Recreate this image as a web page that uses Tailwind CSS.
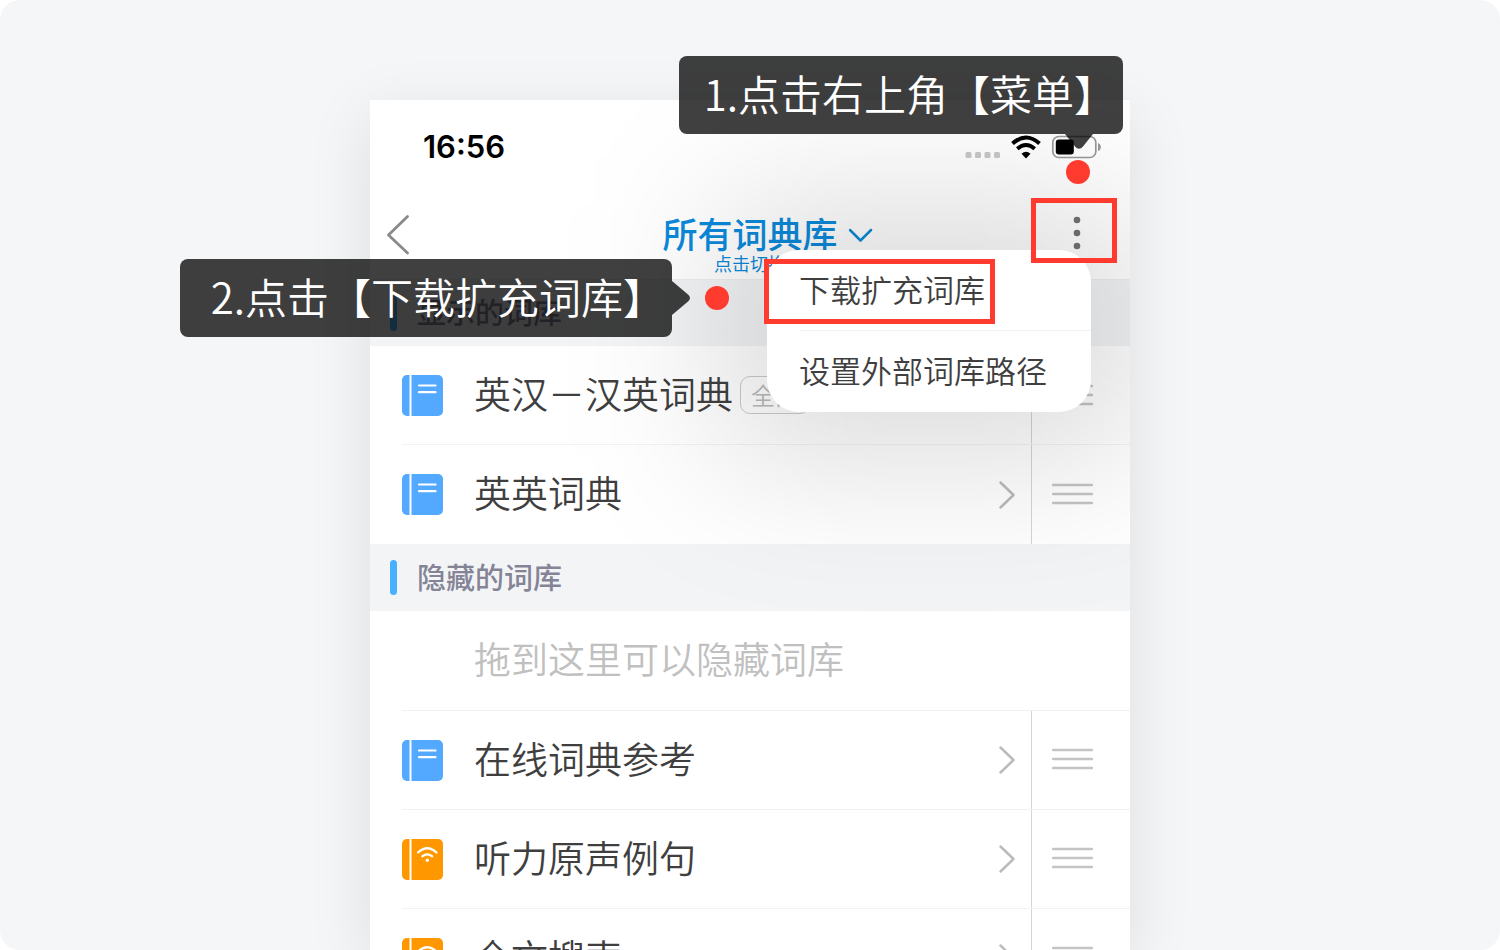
<!DOCTYPE html>
<html lang="zh-CN">
<head>
    <meta charset="UTF-8">
    <meta name="viewport" content="width=device-width, initial-scale=1.0">
    <title>下载扩充词库</title>
    <script src="https://cdn.jsdelivr.net/npm/@tailwindcss/browser@4"></script>
</head>
<body class="bg-white font-['Noto_Sans_CJK_SC',sans-serif]">
    <!-- shared icons -->
    <svg class="hidden">
        <symbol id="book" viewBox="0 0 41 41">
            <path d="M5 0H7.500V41H5A5 5 0 0 1 0 36V5A5 5 0 0 1 5 0Z" fill="currentColor"/>
            <path d="M9.500 0H36A5 5 0 0 1 41 5V36A5 5 0 0 1 36 41H9.500Z" fill="currentColor"/>
        </symbol>
        <symbol id="book-text" viewBox="0 0 41 41">
            <use href="#book"/>
            <path d="M17 10.500H33.500M17 17.200H33.500" stroke="#fff" stroke-width="2.200" stroke-linecap="round"/>
        </symbol>
        <symbol id="book-sound" viewBox="0 0 41 41">
            <use href="#book"/>
            <path d="M16 13.500Q25.300 5 34.500 13.500M20.300 17.300Q25.300 13.300 30.300 17.300" fill="none" stroke="#fff" stroke-width="2.200" stroke-linecap="round"/>
            <circle cx="25.300" cy="21.300" r="1.700" fill="#fff"/>
        </symbol>
        <symbol id="next" viewBox="0 0 18 30">
            <path d="M2.500 2.500L15.500 15L2.500 27.500" fill="none" stroke="currentColor" stroke-width="2.500" stroke-linecap="round" stroke-linejoin="round"/>
        </symbol>
        <symbol id="drag" viewBox="0 0 41 24">
            <path d="M1 3H40M1 12H40M1 21H40" stroke="currentColor" stroke-width="2.400" stroke-linecap="round"/>
        </symbol>
    </svg>

    <main class="h-screen overflow-hidden rounded-[20px] bg-[#f5f6f8] pt-[100px]">
        <div class="relative mx-auto h-full w-full max-w-[760px]">

            <!-- phone screen -->
            <div class="h-full shadow-[0_16px_60px_rgba(0,0,0,0.1)]">
                <div class="relative h-full overflow-hidden bg-white text-[#3f3f3f]">
                    <div class="flex h-24 items-center justify-between pr-[29px] pb-[2px] pl-[53px]">
                        <time class="font-[Inter,sans-serif] text-[31px] leading-10 font-semibold text-black">16:56</time>
                        <div class="flex items-center">
                            <svg class="mt-4 mr-[9px] h-[6px] w-9" viewBox="0 0 36 6" fill="#c9c9c9">
                                <rect x="0.500" width="6" height="6" rx="1.500"/>
                                <rect x="10" width="6" height="6" rx="1.500"/>
                                <rect x="19.500" width="6" height="6" rx="1.500"/>
                                <rect x="29" width="6" height="6" rx="1.500"/>
                            </svg>
                            <svg class="mr-[9px] h-6 w-8" viewBox="0 0 32 24" fill="none" stroke="#000">
                                <path d="M2.500 8.500Q16 -3.500 29.500 8.500" stroke-width="4"/>
                                <path d="M7.300 13.700Q16 6.300 24.700 13.700" stroke-width="4"/>
                                <path d="M11.500 18.700Q16 14.700 20.500 18.700L16 23.500Z" fill="#000" stroke="none"/>
                            </svg>
                            <svg class="h-6 w-[50px]" viewBox="0 0 50 24">
                                <rect x="1.800" y="1.500" width="43" height="21" rx="6" fill="none" stroke="#999" stroke-width="1.700"/>
                                <rect x="4.800" y="4.500" width="18" height="15" rx="3" fill="#000"/>
                                <path d="M47 8Q49.800 9 49.800 12T47 16Z" fill="#999"/>
                            </svg>
                        </div>
                    </div>

                    <header class="grid h-[83px] grid-cols-[1fr_auto_1fr] pt-[17px]">
                        <button class="ml-4 h-11 w-6" aria-label="返回">
                            <svg class="h-11 w-6" viewBox="0 0 24 44" fill="none" stroke="#8a8a8a" stroke-width="2.800" stroke-linecap="round" stroke-linejoin="round">
                                <path d="M21.500 3.500L2.500 22L21.500 40"/>
                            </svg>
                        </button>
                        <button class="flex flex-col items-center text-[#0b8adb]">
                            <span class="relative text-[35px] leading-10 font-medium">所有词典库
                                <svg class="absolute top-[14px] left-full ml-[11px] h-4 w-6" viewBox="0 0 24 16" fill="none" stroke="currentColor" stroke-width="2.500" stroke-linecap="round" stroke-linejoin="round">
                                    <path d="M1 3L11.500 13.500L22 3"/>
                                </svg>
                            </span>
                            <span class="text-lg leading-5">点击切换</span>
                        </button>
                        <button class="mr-[35px] h-10 w-9 justify-self-end" aria-label="菜单">
                            <svg class="mx-auto h-10 w-2" viewBox="0 0 8 40" fill="#737373">
                                <circle cx="4" cy="7" r="3.300"/>
                                <circle cx="4" cy="20" r="3.300"/>
                                <circle cx="4" cy="33" r="3.300"/>
                            </svg>
                        </button>
                    </header>

                    <h2 class="flex h-[67px] items-center gap-5 border-t border-[#eceef0] bg-[#f2f4f6] pl-5 text-[29px] text-[#858496]">
                        <span class="h-[35px] w-[7px] rounded-full bg-[#47b0ff]"></span><span class="pb-[2px] font-medium">显示的词库</span>
                    </h2>
                    <ul class="pl-8 text-[37px] font-[350]">
                        <li class="flex h-[99px] items-center border-b border-[#f2f2f2]">
                            <svg class="mr-[31px] size-[41px] text-[#52a9ff]"><use href="#book-text"/></svg>
                            <span class="pb-[3px]">英汉－汉英词典</span>
                            <span class="ml-[7px] rounded-[10px] border border-[#ccc] px-[10px] text-2xl leading-9 text-[#bbb]">全部</span>
                            <svg class="mr-[15px] ml-auto h-[30px] w-[18px] text-[#bbb]"><use href="#next"/></svg>
                            <button class="h-full w-[99px] border-l border-[#d5d5d5] pl-5" aria-label="拖动排序"><svg class="h-6 w-[41px] text-[#c4c4c4]"><use href="#drag"/></svg></button>
                        </li>
                        <li class="flex h-[99px] items-center">
                            <svg class="mr-[31px] size-[41px] text-[#52a9ff]"><use href="#book-text"/></svg>
                            <span class="pb-[3px]">英英词典</span>
                            <svg class="mr-[15px] ml-auto h-[30px] w-[18px] text-[#bbb]"><use href="#next"/></svg>
                            <button class="h-full w-[99px] border-l border-[#d5d5d5] pb-[2px] pl-5" aria-label="拖动排序"><svg class="h-6 w-[41px] text-[#c4c4c4]"><use href="#drag"/></svg></button>
                        </li>
                    </ul>

                    <h2 class="flex h-[67px] items-center gap-5 bg-[#f2f4f6] pl-5 text-[29px] text-[#858496]">
                        <span class="h-[35px] w-[7px] rounded-full bg-[#47b0ff]"></span><span class="pb-[2px] font-medium">隐藏的词库</span>
                    </h2>
                    <ul class="pl-8 text-[37px] font-[350]">
                        <li class="flex h-[100px] items-center border-b border-[#f2f2f2] pb-[3px] pl-[72px] text-[#c0c0c0]">拖到这里可以隐藏词库</li>
                        <li class="flex h-[99px] items-center border-b border-[#f2f2f2]">
                            <svg class="mr-[31px] size-[41px] text-[#52a9ff]"><use href="#book-text"/></svg>
                            <span class="pb-[3px]">在线词典参考</span>
                            <svg class="mr-[15px] ml-auto h-[30px] w-[18px] text-[#bbb]"><use href="#next"/></svg>
                            <button class="h-full w-[99px] border-l border-[#d5d5d5] pb-[2px] pl-5" aria-label="拖动排序"><svg class="h-6 w-[41px] text-[#c4c4c4]"><use href="#drag"/></svg></button>
                        </li>
                        <li class="flex h-[99px] items-center border-b border-[#f2f2f2]">
                            <svg class="mr-[31px] size-[41px] text-[#ff9800]"><use href="#book-sound"/></svg>
                            <span class="pb-[3px]">听力原声例句</span>
                            <svg class="mr-[15px] ml-auto h-[30px] w-[18px] text-[#bbb]"><use href="#next"/></svg>
                            <button class="h-full w-[99px] border-l border-[#d5d5d5] pb-[2px] pl-5" aria-label="拖动排序"><svg class="h-6 w-[41px] text-[#c4c4c4]"><use href="#drag"/></svg></button>
                        </li>
                        <li class="flex h-[99px] items-center border-b border-[#f2f2f2]">
                            <svg class="mr-[31px] size-[41px] text-[#ff9800]"><use href="#book-sound"/></svg>
                            <span class="pb-[3px]">全文搜索</span>
                            <svg class="mr-[15px] ml-auto h-[30px] w-[18px] text-[#bbb]"><use href="#next"/></svg>
                            <button class="h-full w-[99px] border-l border-[#d5d5d5] pb-[2px] pl-5" aria-label="拖动排序"><svg class="h-6 w-[41px] text-[#c4c4c4]"><use href="#drag"/></svg></button>
                        </li>
                    </ul>

                    <!-- dropdown menu, with a wide soft shadow under it -->
                    <div class="absolute top-[150px] right-[39px] w-[324px]">
                        <div class="absolute -inset-12 rounded-[32px] bg-black/14 blur-[76px]"></div>
                        <div class="relative rounded-[32px] bg-white pl-8 text-[31px] font-[350]">
                            <button class="block h-[81px] w-full border-b border-[#f2f2f2] pb-[2px] text-left">下载扩充词库</button>
                            <button class="block h-[81px] w-full pb-[2px] text-left">设置外部词库路径</button>
                        </div>
                    </div>
                </div>
            </div>

            <!-- step 1 -->
            <div class="absolute -top-11 right-[7px] flex h-[78px] items-center rounded-lg bg-black/75 pr-[7px] pb-[6px] pl-[25px] text-[42px] font-[350] whitespace-nowrap text-white">
                1.点击右上角【菜单】
                <svg class="absolute top-full right-[30px] h-[15px] w-7" viewBox="0 0 28 15" fill="#000" fill-opacity="0.750"><path d="M0 0H28L18 12.500Q14 17 10 12.500Z"/></svg>
            </div>
            <span class="absolute top-[60px] right-10 size-6 rounded-full bg-[#ff3b30]"></span>
            <div class="absolute top-[98px] right-[13px] h-[65px] w-[86px] border-5 border-[#ff3b30]"></div>

            <!-- step 2 -->
            <div class="absolute top-[159px] right-[458px] flex h-[78px] items-center rounded-lg bg-black/75 pr-[7px] pb-[6px] pl-[31px] text-[42px] font-[350] whitespace-nowrap text-white">
                2.点击【下载扩充词库】
                <svg class="absolute top-[22px] left-full h-[34px] w-[18px]" viewBox="0 0 18 34" fill="#000" fill-opacity="0.750"><path d="M0 0L16 13.500Q20 17 16 20.500L0 34Z"/></svg>
            </div>
            <span class="absolute top-[186px] right-[401px] size-6 rounded-full bg-[#ff3b30]"></span>
            <div class="absolute top-[159px] right-[135px] h-[65px] w-[231px] border-5 border-[#ff3b30]"></div>
        </div>
    </main>
</body>
</html>
